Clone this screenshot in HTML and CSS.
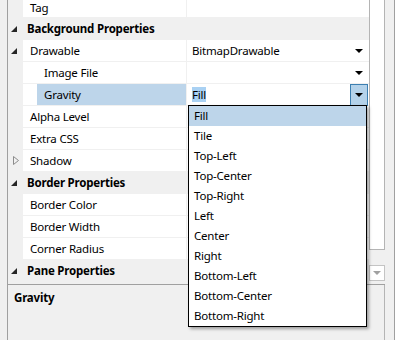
FILE: index.html
```html
<!DOCTYPE html>
<html lang="en">
  <head>
    <meta charset="UTF-8" />
    <title>Property Grid</title>
    <link rel="stylesheet" href="styles.css">
  </head>
  <body>
    <div class="window">
      <div class="edge-left"></div>

      <div class="main">
        <div class="top">
          <div class="grid">
            <div class="row first">
              <span class="gutter"></span>
              <span class="name">Tag</span>
              <span class="value"></span>
            </div>

            <div class="row cat">
              <span class="gutter"><svg class="open" width="6" height="6" viewBox="0 0 6 6"><polygon points="6,0 6,6 0,6" /></svg></span>
              <span class="label">Background Properties</span>
            </div>
            <div class="row">
              <span class="gutter"><svg class="open" width="6" height="6" viewBox="0 0 6 6"><polygon points="6,0 6,6 0,6" /></svg></span>
              <span class="name">Drawable</span>
              <span class="value">BitmapDrawable<i class="arrow"></i></span>
            </div>
            <div class="row">
              <span class="gutter"></span>
              <span class="name nested">Image File</span>
              <span class="value"><span></span><i class="arrow"></i></span>
            </div>
            <div class="row selected">
              <span class="gutter"></span>
              <span class="name nested">Gravity</span>
              <span class="value editing">
                <span class="sel-text">Fill</span>
                <span class="drop-btn"><i class="arrow"></i></span>
              </span>
            </div>
            <div class="row">
              <span class="gutter"></span>
              <span class="name">Alpha Level</span>
              <span class="value"></span>
            </div>
            <div class="row">
              <span class="gutter"></span>
              <span class="name">Extra CSS</span>
              <span class="value"></span>
            </div>
            <div class="row">
              <span class="gutter"><svg class="closed" width="6" height="9" viewBox="0 0 6 9"><polygon points="0.5,0.5 5.5,4.5 0.5,8.5" /></svg></span>
              <span class="name">Shadow</span>
              <span class="value"></span>
            </div>

            <div class="row cat">
              <span class="gutter"><svg class="open" width="6" height="6" viewBox="0 0 6 6"><polygon points="6,0 6,6 0,6" /></svg></span>
              <span class="label">Border Properties</span>
            </div>
            <div class="row">
              <span class="gutter"></span>
              <span class="name">Border Color</span>
              <span class="value"></span>
            </div>
            <div class="row">
              <span class="gutter"></span>
              <span class="name">Border Width</span>
              <span class="value"></span>
            </div>
            <div class="row">
              <span class="gutter"></span>
              <span class="name">Corner Radius</span>
              <span class="value"></span>
            </div>

            <div class="row cat">
              <span class="gutter"><svg class="open" width="6" height="6" viewBox="0 0 6 6"><polygon points="6,0 6,6 0,6" /></svg></span>
              <span class="label">Pane Properties</span>
            </div>
          </div>

          <div class="scrollbar">
            <div class="thumb"></div>
            <div class="scroll-down"><i class="arrow grey"></i></div>
          </div>
        </div>

        <div class="desc">Gravity</div>
      </div>

      <div class="edge-right"></div>

      <!-- open dropdown for Gravity -->
      <ul class="popup">
        <li class="active">Fill</li>
        <li>Tile</li>
        <li>Top-Left</li>
        <li>Top-Center</li>
        <li>Top-Right</li>
        <li>Left</li>
        <li>Center</li>
        <li>Right</li>
        <li>Bottom-Left</li>
        <li>Bottom-Center</li>
        <li>Bottom-Right</li>
      </ul>
    </div>
  </body>
</html>
```
FILE: styles.css
```css
* {
  box-sizing: border-box;
}

body {
  margin: 0;
  font-family: "Noto Sans", "Open Sans", sans-serif;
  font-size: 11.5px;
  letter-spacing: -0.2px;
  color: #000;
  background-color: #f0f0f0;
}

.window {
  position: relative;
  display: flex;
  width: 396px;
  height: 340px;
  overflow: hidden;
  background-color: #f0f0f0;
}

.edge-left {
  width: 8px;
  border-right: 1px solid #a0a0a0;
}

.edge-right {
  width: 11px;
  background: linear-gradient(to right, #f0f0f0 9px, #a0a0a0 9px, #a0a0a0 10px, #fff 10px);
}

.main {
  width: 377px;
  display: flex;
  flex-direction: column;
}

.top {
  display: flex;
  height: 285px;
  overflow: hidden;
  border-bottom: 1px solid #a0a0a0;
}

.grid {
  width: 361px;
  display: flex;
  flex-direction: column;
}

.row {
  display: flex;
  height: 22px;
  line-height: 21px;
  border-bottom: 1px solid #f0f0f0;
  background-color: #fff;
  white-space: nowrap;
}

/* top row is scrolled partly out of view */
.row.first {
  height: 18px;
  line-height: 15px;
}

.gutter {
  width: 15px;
  flex: none;
  display: flex;
  align-items: center;
  padding-left: 3px;
  background-color: #f0f0f0;
}

.gutter .open {
  fill: #262626;
}

.gutter .closed {
  margin-left: 2px;
  fill: none;
  stroke: #8c8c8c;
}

.name {
  width: 164px;
  flex: none;
  padding-left: 7px;
  border-right: 1px solid #f0f0f0;
}

.name.nested {
  width: 150px;
  margin-left: 14px;
}

.row.selected .name {
  background-color: #bdd5ea;
}

.value {
  flex: 1;
  display: flex;
  align-items: center;
  justify-content: space-between;
  padding: 0 5px;
}

.value.editing {
  align-items: flex-start;
  padding-right: 1px;
}

.sel-text {
  margin-top: 3px;
  line-height: 15px;
  background-color: #a9d1f3;
}

.drop-btn {
  width: 18px;
  height: 22px;
  display: flex;
  align-items: center;
  justify-content: center;
  border: 1px solid #3c7fb1;
  background-color: #b4d2ea;
}

.arrow {
  width: 0;
  height: 0;
  border-left: 4px solid transparent;
  border-right: 4px solid transparent;
  border-top: 4px solid #000;
  margin-right: 1px;
}

.arrow.grey {
  border-top: 4px solid #a0a0a0;
  margin: 0;
}

.cat {
  background-color: #f0f0f0;
  font-weight: bold;
}

.cat .label {
  padding-left: 4px;
}

.scrollbar {
  width: 16px;
  display: flex;
  flex-direction: column;
  background-color: #f0f0f0;
}

.thumb {
  height: 250px;
  border: 1px solid #b4b4b4;
  border-top: none;
  background-color: #fff;
}

.scroll-down {
  height: 16px;
  margin-top: 15px;
  display: flex;
  align-items: center;
  justify-content: center;
  border: 1px solid #c4c4c4;
  background-color: #fff;
}

.desc {
  flex: 1;
  padding: 5px 6px;
  font-weight: bold;
  line-height: 16px;
  border-right: 1px solid #b4b4b4;
}

.popup {
  position: absolute;
  left: 188px;
  top: 105px;
  width: 179px;
  margin: 0;
  padding: 0;
  list-style: none;
  background-color: #fff;
  border: 1px solid #000;
  box-shadow: 2px 2px 3px rgba(0, 0, 0, 0.35);
}

.popup li {
  height: 20px;
  line-height: 20px;
  padding-left: 5px;
}

.popup li.active {
  background-color: #bdd5ea;
}
```
